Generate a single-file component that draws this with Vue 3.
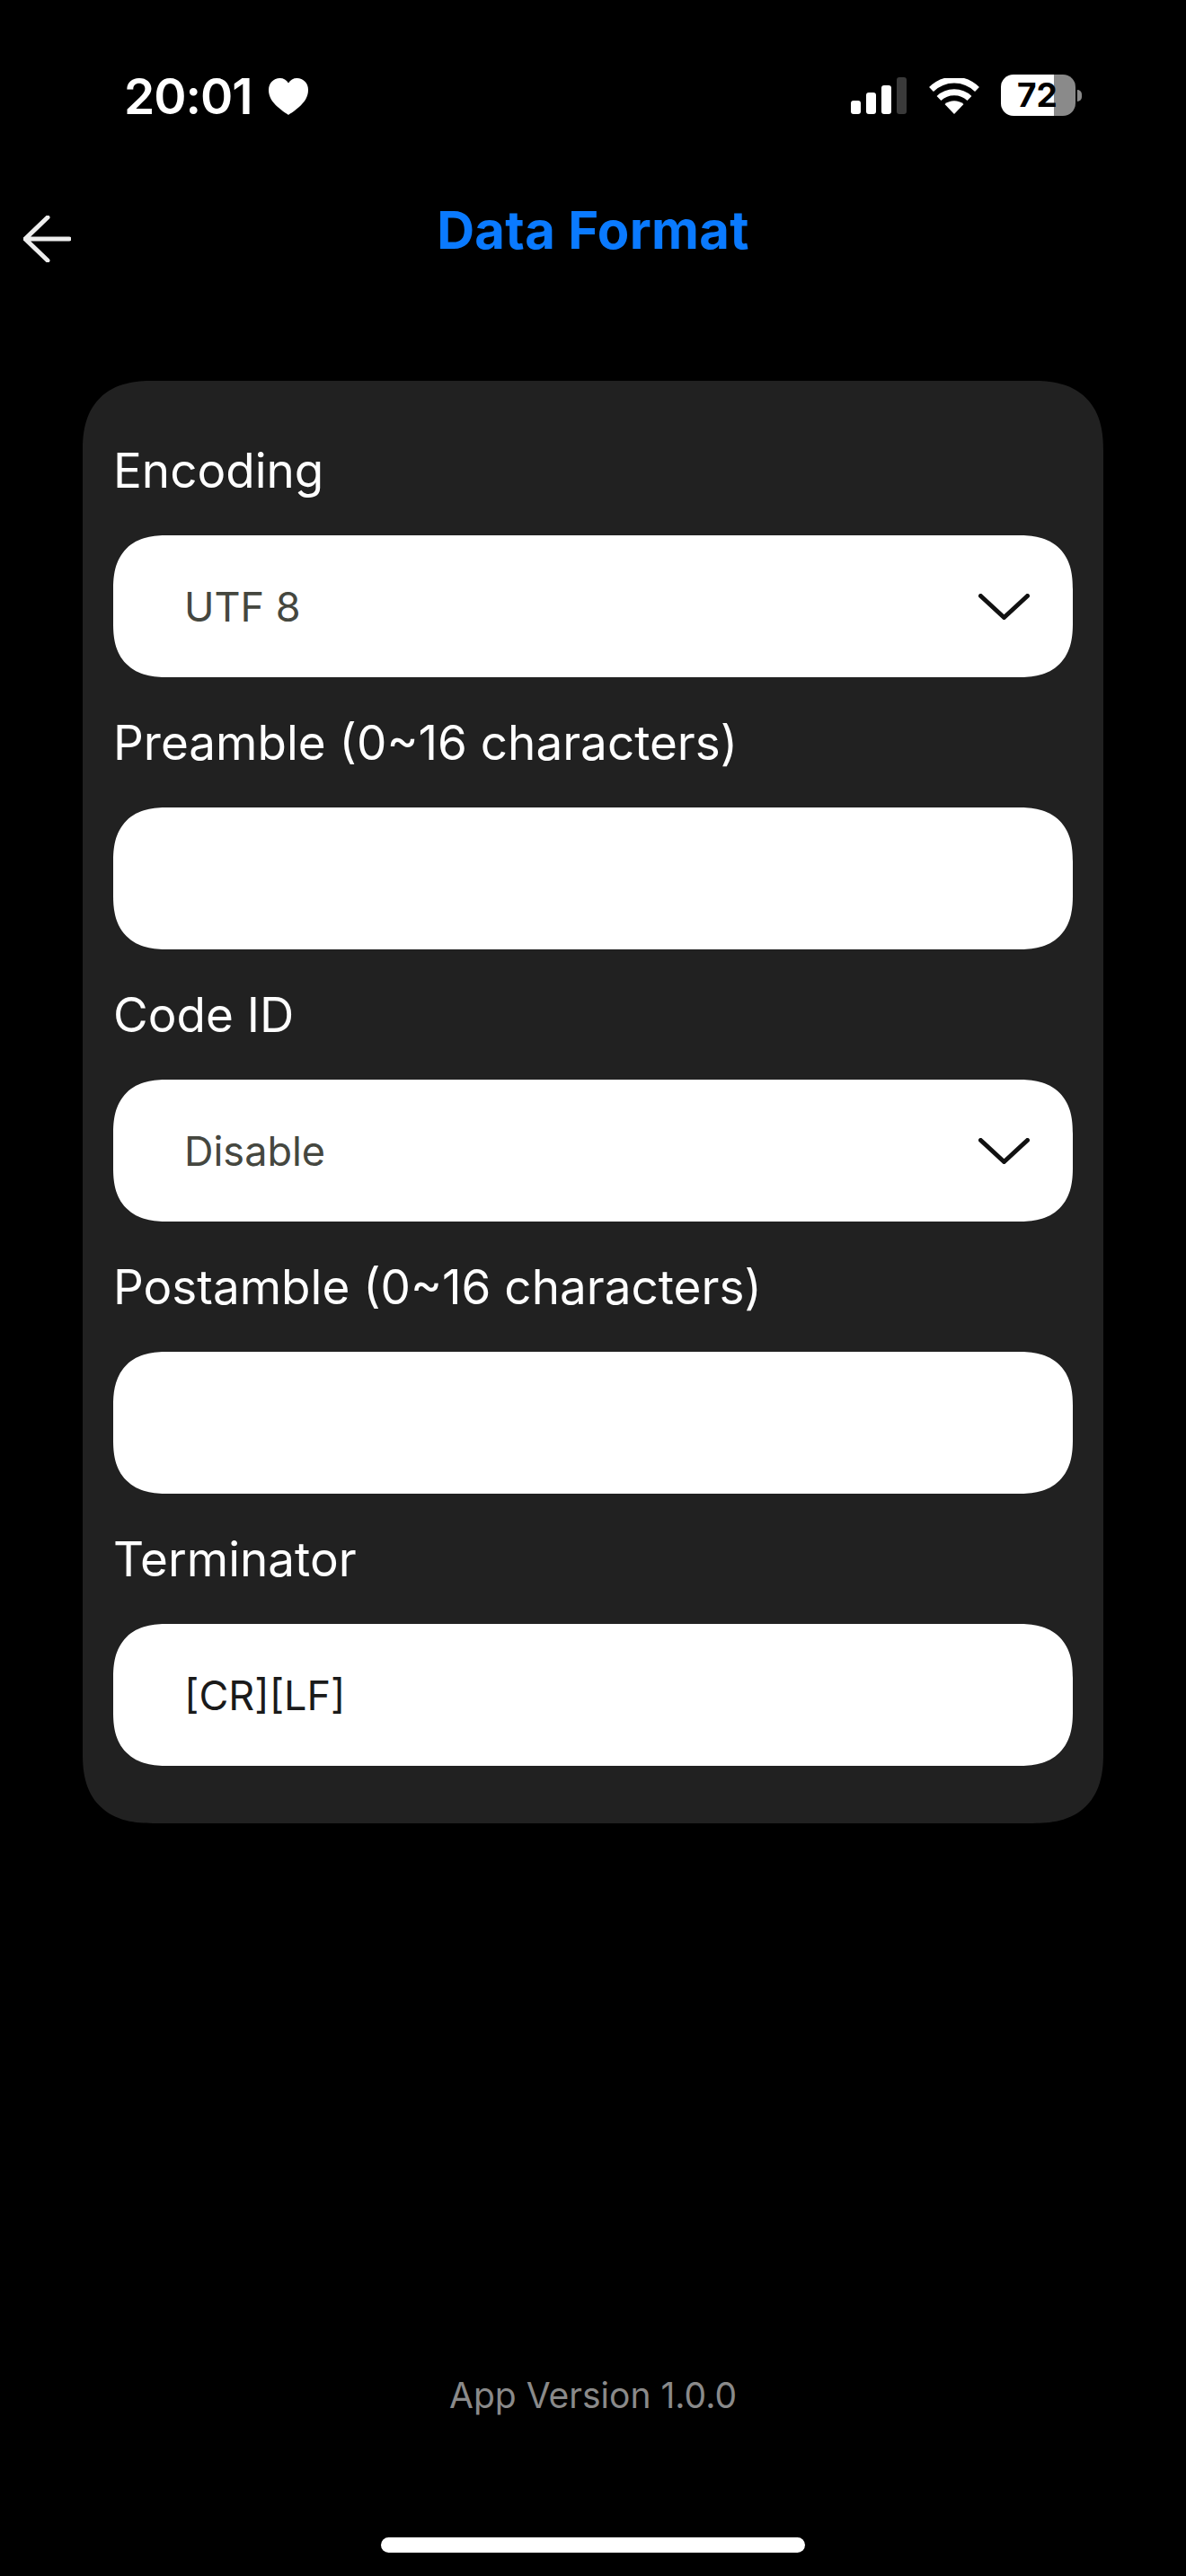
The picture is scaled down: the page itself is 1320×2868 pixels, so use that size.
<template>
  <div class="page">
    <div class="status">
      <div class="clock">
        <span class="time">20:01</span>
        <svg class="heart" viewBox="0 0 44 41" width="44" height="41">
          <path d="M22 41C20 39.500 15 36.500 10 32C4 26.500 0 21 0 13C0 5.500 5.500 0 12.500 0C16.500 0 20 2 22 5.500C24 2 27.500 0 31.500 0C38.500 0 44 5.500 44 13C44 21 40 26.500 34 32C29 36.500 24 39.500 22 41Z" fill="#fff" />
        </svg>
      </div>
      <div class="indicators">
        <div class="signal">
          <i v-for="(h, n) in bars" :key="n" :class="{ off: n === 3 }" :style="{ height: h + 'px' }"></i>
        </div>
        <svg class="wifi" viewBox="0 0 56 40" width="56" height="40">
          <path d="M28 40L17.500 29C23.500 24 32.500 24 38.500 29Z" fill="#fff" />
          <path d="M11 22.500C20.500 13.500 35.500 13.500 45 22.500" fill="none" stroke="#fff" stroke-width="7" />
          <path d="M2.500 12.500C17 -1.500 39 -1.500 53.500 12.500" fill="none" stroke="#fff" stroke-width="7" />
        </svg>
        <div class="battery">
          <div class="level">
            <span class="pct">72</span>
          </div>
          <span class="nub"></span>
        </div>
      </div>
    </div>

    <div class="head">
      <svg class="back" viewBox="0 0 53 52" width="53" height="52">
        <path d="M27 2L2 26L27 50M2 26H51" fill="none" stroke="#eee" stroke-width="5" stroke-linecap="round" stroke-linejoin="round" />
      </svg>
      <h1>Data Format</h1>
    </div>

    <div class="card">
      <div class="field" v-for="f in fields" :key="f.label">
        <label>{{ f.label }}</label>
        <div class="box" :class="{ dark: f.dark }">
          <span>{{ f.value }}</span>
          <svg v-if="f.select" class="chev" viewBox="0 0 57 29" width="57" height="29">
            <path d="M2.500 2.500L28.500 26.500L54.500 2.500" fill="none" stroke="#111" stroke-width="5" stroke-linecap="round" stroke-linejoin="round" />
          </svg>
        </div>
      </div>
    </div>

    <div class="version">App Version 1.0.0</div>
    <div class="home"></div>
  </div>
</template>

<script setup>
const bars = [15, 24, 32, 41]

const fields = [
  { label: "Encoding", value: "UTF 8", select: true },
  { label: "Preamble (0~16 characters)", value: "" },
  { label: "Code ID", value: "Disable", select: true },
  { label: "Postamble (0~16 characters)", value: "" },
  { label: "Terminator", value: "[CR][LF]", dark: true },
]
</script>

<style>
html, body { background: #000; }
</style>

<style scoped>
.page {
  height: 2868px;
  display: flex;
  flex-direction: column;
  background: #000;
  color: #fff;
  font-family: Inter, "Liberation Sans", sans-serif;
}

.status {
  height: 150px;
  box-sizing: border-box;
  padding: 83px 123px 0 138px;
  display: flex;
  justify-content: space-between;
  align-items: flex-start;
}
.clock { display: flex; align-items: center; gap: 18px; }
.time { font-size: 55px; line-height: 48px; font-weight: 600; letter-spacing: -1px; }
.indicators { display: flex; align-items: flex-start; }
.signal { display: flex; align-items: flex-end; gap: 6px; height: 44px; margin-right: 25px; }
.signal i { display: block; width: 11px; background: #fff; border-radius: 3px; }
.signal i.off { background: #3a3a3a; }
.wifi { margin: 4px 24px 0 0; }
.battery { position: relative; }
.level {
  width: 83px;
  height: 46px;
  border-radius: 14px;
  background: linear-gradient(90deg, #fff 71%, #8a8a8a 71%);
  display: flex;
  align-items: center;
}
.pct { margin-left: 18px; font-size: 37px; font-weight: 700; color: #000; line-height: 46px; }
.nub {
  position: absolute;
  left: 85px;
  top: 17px;
  width: 5px;
  height: 13px;
  border-radius: 0 6px 6px 0;
  background: #8a8a8a;
}

.head {
  height: 120px;
  position: relative;
  display: flex;
  justify-content: center;
  align-items: flex-start;
}
.head h1 {
  margin: 0;
  font-size: 58px;
  line-height: 100px;
  font-weight: 700;
  letter-spacing: 0.3px;
  color: #0a7aff;
  margin-top: 56px;
}
.back { position: absolute; left: 26px; top: 90px; }

.card {
  margin: 154px 92px 0;
  padding: 27px 34px 64px;
  background: #212121;
  border-radius: 78px;
  corner-shape: superellipse(1.3);
}
.field label {
  display: block;
  height: 145px;
  box-sizing: border-box;
  padding: 23px 0 0 0;
  font-size: 53px;
  line-height: 100px;
}
.box {
  height: 158px;
  box-sizing: border-box;
  padding: 0 48px 0 79px;
  background: #fff;
  border-radius: 60px;
  corner-shape: superellipse(1.3);
  display: flex;
  align-items: center;
  justify-content: space-between;
  font-size: 45px;
  color: #45473f;
}
.box.dark { color: #1a1a1a; }

.version {
  margin-top: auto;
  text-align: center;
  font-size: 39px;
  line-height: 50px;
  color: #8a8a8a;
}
.home {
  width: 472px;
  height: 17px;
  margin: 133px auto 26px;
  background: #fff;
  border-radius: 9px;
}
</style>
